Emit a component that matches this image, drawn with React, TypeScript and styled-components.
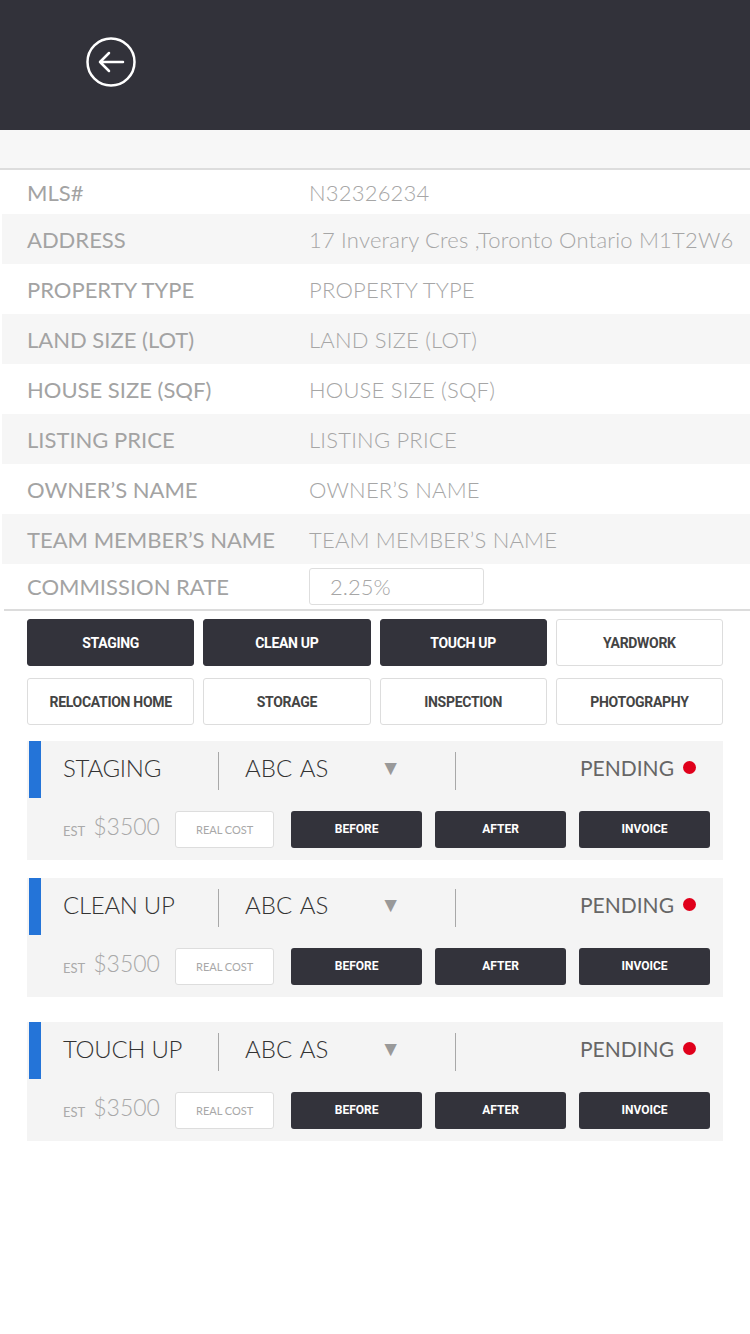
import styled, { createGlobalStyle } from "styled-components";

const GlobalStyle = createGlobalStyle`
  html, body {
    margin: 0;
    padding: 0;
    background: #ffffff;
    font-family: Lato, "Noto Sans", sans-serif;
  }
  * { box-sizing: border-box; }
`;

const Page = styled.div`
  width: 750px;
  min-height: 1334px;
  background: #ffffff;
`;

const TopBar = styled.div`
  height: 130px;
  background: #32323a;
  display: flex;
  align-items: center;
  padding-left: 86px;
  padding-bottom: 6px;
`;

const BackButton = styled.button`
  width: 50px;
  height: 50px;
  padding: 0;
  border: none;
  background: transparent;
  display: flex;
  cursor: pointer;
`;

const SubBand = styled.div`
  height: 40px;
  background: #f7f7f7;
  border-bottom: 2px solid #dddddd;
`;

const InfoList = styled.div`
  display: flex;
  flex-direction: column;
  padding-left: 2px;
`;

const InfoRow = styled.div<{ $shade?: boolean; $h: number }>`
  display: flex;
  align-items: center;
  height: ${(p) => p.$h}px;
  background: ${(p) => (p.$shade ? "#f6f6f6" : "#ffffff")};
`;

const Label = styled.div`
  width: 307px;
  padding-left: 25px;
  font-size: 22px;
  color: #a3a3a3;
  white-space: nowrap;
`;

const Value = styled.div`
  font-size: 22px;
  font-weight: 300;
  color: #a6a6a6;
  white-space: nowrap;
  letter-spacing: 0.2px;
`;

const RateBox = styled.div`
  width: 175px;
  height: 37px;
  border: 1px solid #dedede;
  border-radius: 3px;
  display: flex;
  align-items: center;
  padding-left: 20px;
  font-size: 22px;
  font-weight: 300;
  color: #a6a6a6;
`;

const Divider = styled.div`
  height: 2px;
  margin-left: 4px;
  background: #dcdcdc;
`;

const ServiceGrid = styled.div`
  display: grid;
  grid-template-columns: repeat(4, 1fr);
  column-gap: 9px;
  row-gap: 12px;
  padding: 8px 27px 0 27px;
`;

const ServiceButton = styled.button<{ $active?: boolean }>`
  height: 47px;
  border-radius: 3px;
  border: 1px solid ${(p) => (p.$active ? "#33333b" : "#dddddd")};
  background: ${(p) => (p.$active ? "#33333b" : "#ffffff")};
  color: ${(p) => (p.$active ? "#ffffff" : "#444444")};
  font-family: Roboto, sans-serif;
  font-weight: 700;
  font-size: 14px;
  letter-spacing: -0.3px;
  padding: 0;
`;

const Cards = styled.div`
  display: flex;
  flex-direction: column;
  padding: 16px 27px 0 27px;
`;

const Card = styled.div<{ $gap: number }>`
  background: #f4f4f4;
  height: 119px;
  margin-bottom: ${(p) => p.$gap}px;
  display: flex;
  flex-direction: column;
`;

const CardTop = styled.div`
  display: flex;
  align-items: center;
  height: 57px;
`;

const Accent = styled.div`
  width: 12px;
  height: 57px;
  margin-left: 2px;
  background: #2474d8;
`;

const CardTitle = styled.div`
  width: 177px;
  padding-left: 22px;
  padding-bottom: 5px;
  font-size: 24px;
  font-weight: 300;
  color: #333333;
  white-space: nowrap;
  letter-spacing: -0.3px;
`;

const VLine = styled.div`
  width: 1px;
  height: 38px;
  background: #a8a8a8;
  margin-top: 2px;
`;

const Assignee = styled.div`
  width: 236px;
  padding-left: 26px;
  padding-right: 54px;
  padding-bottom: 5px;
  display: flex;
  align-items: center;
  justify-content: space-between;
  font-size: 24px;
  font-weight: 300;
  color: #333333;
  word-spacing: 2px;
`;

const Caret = styled.span`
  color: #999999;
  font-size: 21px;
`;

const Status = styled.div`
  flex: 1;
  display: flex;
  align-items: center;
  justify-content: flex-end;
  gap: 9px;
  padding-right: 27px;
  padding-bottom: 5px;
  font-size: 21px;
  font-weight: 400;
  color: #666666;
`;

const Dot = styled.span`
  width: 13px;
  height: 13px;
  border-radius: 50%;
  background: #e0001b;
`;

const CardBottom = styled.div`
  display: flex;
  align-items: center;
  height: 36px;
  margin-top: 13px;
  padding-left: 36px;
`;

const Est = styled.span`
  font-size: 13px;
  color: #aaaaaa;
  margin-right: 8px;
  padding-top: 4px;
`;

const Amount = styled.span`
  font-size: 23px;
  font-weight: 300;
  color: #a8a8a8;
  width: 80px;
  padding-bottom: 6px;
`;

const RealCost = styled.div`
  width: 99px;
  height: 37px;
  background: #ffffff;
  border: 1px solid #dddddd;
  border-radius: 3px;
  display: flex;
  align-items: center;
  justify-content: center;
  font-size: 11px;
  color: #a8a8a8;
  margin-left: 2px;
  margin-right: 17px;
`;

const ActionButton = styled.button`
  width: 131px;
  height: 37px;
  margin-right: 13px;
  border: none;
  border-radius: 3px;
  background: #33333b;
  color: #ffffff;
  font-family: Roboto, sans-serif;
  font-weight: 700;
  font-size: 12px;
  padding: 0;
`;

const info = [
  ["MLS#", "N32326234"],
  ["ADDRESS", "17 Inverary Cres ,Toronto Ontario M1T2W6"],
  ["PROPERTY TYPE", "PROPERTY TYPE"],
  ["LAND SIZE (LOT)", "LAND SIZE (LOT)"],
  ["HOUSE SIZE (SQF)", "HOUSE SIZE (SQF)"],
  ["LISTING PRICE", "LISTING PRICE"],
  ["OWNER’S NAME", "OWNER’S NAME"],
  ["TEAM MEMBER’S NAME", "TEAM MEMBER’S NAME"],
];

const services = [
  { name: "STAGING", active: true },
  { name: "CLEAN UP", active: true },
  { name: "TOUCH UP", active: true },
  { name: "YARDWORK", active: false },
  { name: "RELOCATION HOME", active: false },
  { name: "STORAGE", active: false },
  { name: "INSPECTION", active: false },
  { name: "PHOTOGRAPHY", active: false },
];

const jobs = [
  { title: "STAGING", gap: 18 },
  { title: "CLEAN UP", gap: 25 },
  { title: "TOUCH UP", gap: 0 },
];

const BackIcon = () => (
  <svg width="50" height="50" viewBox="0 0 50 50">
    <circle cx="25" cy="25" r="23.5" fill="none" stroke="#ffffff" strokeWidth="2.5" />
    <path
      d="M37 25H14M23 16l-9 9 9 9"
      fill="none"
      stroke="#ffffff"
      strokeWidth="2.5"
      strokeLinecap="round"
      strokeLinejoin="round"
    />
  </svg>
);

const App = () => {
  return (
    <Page>
      <GlobalStyle />
      <TopBar>
        <BackButton>
          <BackIcon />
        </BackButton>
      </TopBar>
      <SubBand />
      <InfoList>
        {info.map(([label, value], i) => (
          <InfoRow key={label} $shade={i % 2 === 1} $h={i === 0 ? 44 : 50}>
            <Label>{label}</Label>
            <Value>{value}</Value>
          </InfoRow>
        ))}
        <InfoRow $h={45}>
          <Label>COMMISSION RATE</Label>
          <RateBox>2.25%</RateBox>
        </InfoRow>
      </InfoList>
      <Divider />
      <ServiceGrid>
        {services.map((s) => (
          <ServiceButton key={s.name} $active={s.active}>
            {s.name}
          </ServiceButton>
        ))}
      </ServiceGrid>
      <Cards>
        {jobs.map((job) => (
          <Card key={job.title} $gap={job.gap}>
            <CardTop>
              <Accent />
              <CardTitle>{job.title}</CardTitle>
              <VLine />
              <Assignee>
                ABC AS
                <Caret>▼</Caret>
              </Assignee>
              <VLine />
              <Status>
                PENDING
                <Dot />
              </Status>
            </CardTop>
            <CardBottom>
              <Est>EST</Est>
              <Amount>$3500</Amount>
              <RealCost>REAL COST</RealCost>
              <ActionButton>BEFORE</ActionButton>
              <ActionButton>AFTER</ActionButton>
              <ActionButton>INVOICE</ActionButton>
            </CardBottom>
          </Card>
        ))}
      </Cards>
    </Page>
  );
};

export default App;
